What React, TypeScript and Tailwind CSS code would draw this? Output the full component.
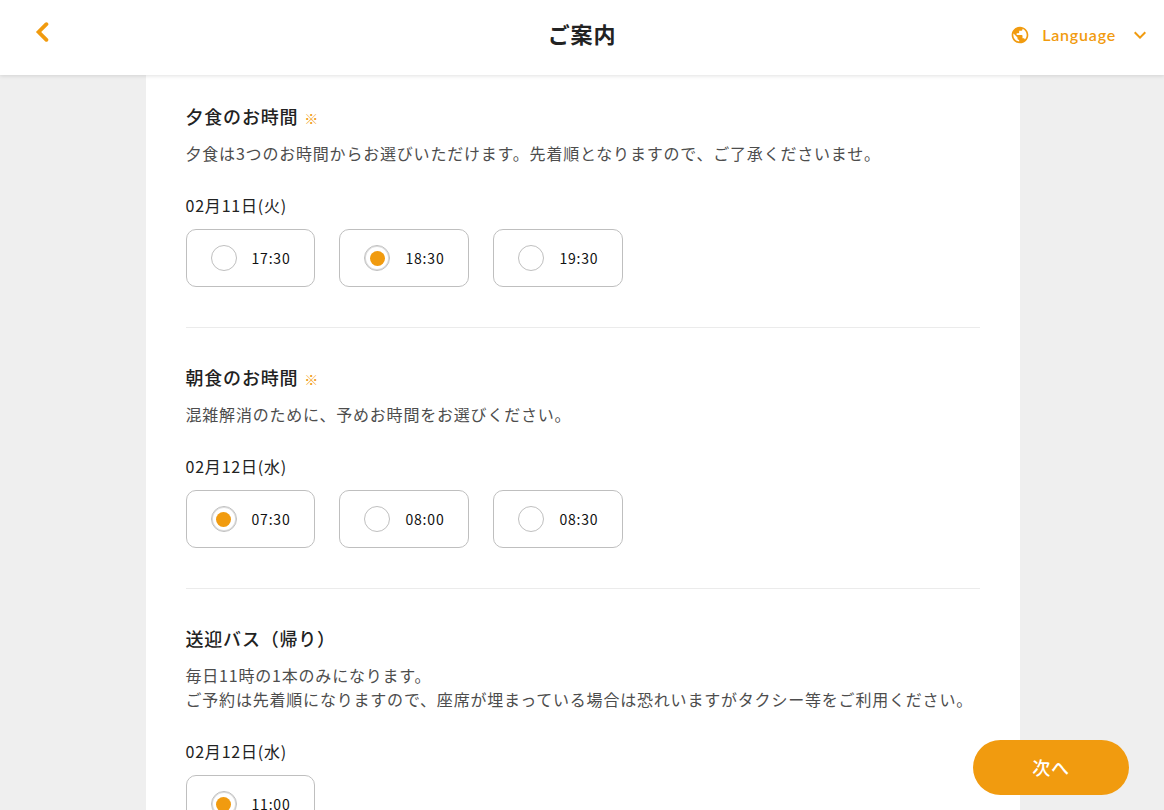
import { useState } from "react";
import { MdExpandMore, MdPublic } from "react-icons/md";

type Question = {
  id: string;
  title: string;
  required: boolean;
  description: string[];
  date: string;
  options: string[];
  initial: string;
};

const questions: Question[] = [
  {
    id: "dinner",
    title: "夕食のお時間",
    required: true,
    description: [
      "夕食は3つのお時間からお選びいただけます。先着順となりますので、ご了承くださいませ。",
    ],
    date: "02月11日(火)",
    options: ["17:30", "18:30", "19:30"],
    initial: "18:30",
  },
  {
    id: "breakfast",
    title: "朝食のお時間",
    required: true,
    description: ["混雑解消のために、予めお時間をお選びください。"],
    date: "02月12日(水)",
    options: ["07:30", "08:00", "08:30"],
    initial: "07:30",
  },
  {
    id: "bus",
    title: "送迎バス（帰り）",
    required: false,
    description: [
      "毎日11時の1本のみになります。",
      "ご予約は先着順になりますので、座席が埋まっている場合は恐れいますがタクシー等をご利用ください。",
    ],
    date: "02月12日(水)",
    options: ["11:00"],
    initial: "11:00",
  },
];

function Header() {
  return (
    <header className="relative z-10 grid h-[75px] shrink-0 grid-cols-[1fr_auto_1fr] items-center bg-white shadow-[0_1px_4px_rgba(0,0,0,0.12)]">
      <button type="button" aria-label="戻る" className="mb-3 ml-8 w-5 cursor-pointer">
        <svg viewBox="0 0 20 20" className="h-5 w-5" fill="none">
          <path
            d="M14.4 2.2 L6.6 10 L14.4 17.8"
            stroke="#f19b0f"
            strokeWidth="3.8"
            strokeLinecap="round"
          />
        </svg>
      </button>

      <h1 className="mb-2.5 text-[22px] leading-8 font-bold">ご案内</h1>

      <button
        type="button"
        className="mr-3 mb-1.5 flex cursor-pointer items-center justify-self-end text-[#f19b0f]"
      >
        <MdPublic className="h-5 w-5" />
        <span className="ml-3 font-['Lato',sans-serif] text-base leading-6 font-semibold">
          Language
        </span>
        <MdExpandMore className="ml-3 h-6 w-6" />
      </button>
    </header>
  );
}

function QuestionSection({ question }: { question: Question }) {
  const [selected, setSelected] = useState(question.initial);

  return (
    <section className="border-b border-[#ebebeb] pt-[35px] pb-10 first:pt-[27px] last:border-b-0">
      <h2 className="text-lg leading-7 font-medium">
        {question.title}
        {question.required && (
          <span className="ml-1.5 text-sm font-bold text-[#f19b0f]">※</span>
        )}
      </h2>

      <div className="mt-[11px] text-base leading-6 text-[#4d4d4d]">
        {question.description.map((line) => (
          <p key={line}>{line}</p>
        ))}
      </div>

      <fieldset className="mt-7">
        <legend className="text-base leading-6">{question.date}</legend>
        <div className="mt-3 flex flex-wrap gap-6">
          {question.options.map((time) => (
            <label
              key={time}
              className="flex h-[58px] cursor-pointer items-center rounded-[10px] border border-[#bfbfbf] px-6 text-sm leading-6 text-[#111111]"
            >
              <input
                type="radio"
                name={question.id}
                value={time}
                checked={selected === time}
                onChange={() => setSelected(time)}
                className="mr-[15px] grid h-[26px] w-[26px] appearance-none place-items-center rounded-full border border-[#bfbfbf] checked:shadow-[inset_0_0_0_1px_#dddddd] checked:before:h-[15px] checked:before:w-[15px] checked:before:rounded-full checked:before:bg-[#f19b0f] checked:before:content-['']"
              />
              {time}
            </label>
          ))}
        </div>
      </fieldset>
    </section>
  );
}

export default function App() {
  return (
    <div
      lang="ja"
      className="flex h-screen flex-col overflow-hidden bg-[#efefef] font-['Noto_Sans_CJK_JP',sans-serif] tracking-wider text-[#222222]"
    >
      <Header />

      <main className="min-h-0 flex-1 overflow-y-auto">
        <div className="mr-36 ml-[12.5%] bg-white px-10">
          {questions.map((question) => (
            <QuestionSection key={question.id} question={question} />
          ))}
        </div>
      </main>

      {/* Floating submit */}
      <button
        type="button"
        className="fixed right-[35px] bottom-[15px] z-20 h-[55px] w-[156px] cursor-pointer rounded-full bg-[#f19b0f] pb-0.5 text-lg leading-7 font-medium text-white"
      >
        次へ
      </button>
    </div>
  );
}
